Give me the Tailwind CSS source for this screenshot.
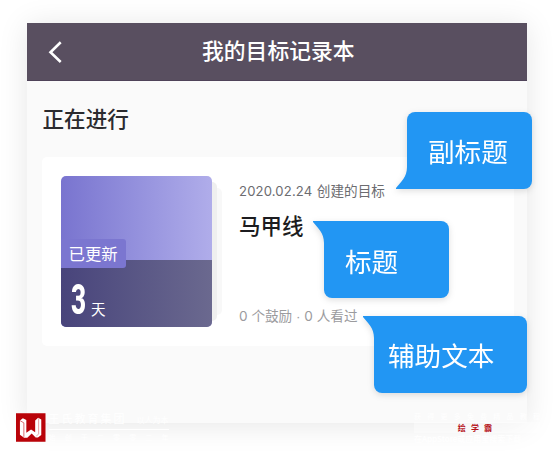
<!DOCTYPE html>
<html lang="zh-CN">
<head>
  <meta charset="UTF-8" />
  <meta name="viewport" content="width=device-width, initial-scale=1.0" />
  <title>我的目标记录本</title>
  <script src="https://cdn.jsdelivr.net/npm/@tailwindcss/browser@4"></script>
</head>
<body class="relative h-[454px] w-[554px] overflow-hidden bg-white px-[27px] pt-[23px] font-['Noto_Sans_CJK_SC',sans-serif]">

  <!-- Phone screen -->
  <div class="flex h-[400px] w-[500px] flex-col bg-[#fafafa] shadow-[0_2px_28px_rgba(0,0,0,0.1)]">
    <header class="flex h-[58px] shrink-0 items-center border-b border-[#4f4359] bg-[#594f60] text-white">
      <svg class="ml-[21px] h-[22px] w-[15px]" viewBox="0 0 15 22" fill="none" stroke="currentColor" stroke-width="2.6">
        <path d="M12.7 1.3 2.5 11.2l10.2 9.8" />
      </svg>
      <h1 class="-mt-[3px] ml-[139px] text-[21.8px] leading-none font-medium">我的目标记录本</h1>
    </header>

    <h2 class="mt-[26px] ml-[15.5px] text-[21.6px] leading-[22px] font-medium text-[#2b2b2f]">正在进行</h2>

    <!-- Goal card -->
    <div class="mt-[28px] ml-[15px] flex h-[189px] w-[472px] rounded-[5px] bg-white pt-[19px] pl-[19px]">
      <div class="relative h-[151px] w-[151px] shrink-0">
        <div class="absolute top-[12px] -right-[10px] h-[127px] w-5 rounded-[5px] bg-[#f8f8f8]"></div>
        <div class="absolute top-[6px] -right-[5px] h-[139px] w-5 rounded-[5px] bg-[#efefef]"></div>
        <div class="relative flex h-full w-full flex-col overflow-hidden rounded-[5px] bg-linear-to-r from-[#7974cf] to-[#b0adea]">
          <div class="mt-[63px] flex h-[29px] shrink-0">
            <span class="z-10 w-[65px] rounded-r-[3px] bg-[#7b76d0] pl-[7.5px] text-[16.4px] leading-[28px] text-white">已更新</span>
          </div>
          <div class="-mt-[8px] flex h-[67px] items-start bg-linear-to-r from-[#48447b] to-[#6b698f] pl-[10px] text-white">
            <span class="mt-[17px] w-[20px] origin-left scale-x-[0.61] font-[Roboto,sans-serif] text-[43px] leading-[44px] font-extrabold">3</span>
            <span class="mt-[40px] text-[14.5px] leading-[17px]">天</span>
          </div>
        </div>
      </div>
      <div class="ml-[27px] flex flex-col whitespace-nowrap">
        <p class="mt-[6px] text-[13.6px] leading-[16px] text-[#6c6c70]"><span class="mr-[4.5px] font-[Inter,sans-serif] text-[13.1px] tracking-[0.15px]">2020.02.24</span>创建的目标</p>
        <h3 class="mt-[15px] text-[21.5px] leading-[22px] font-medium text-[#1c1c20]">马甲线</h3>
        <p class="mt-[72px] font-[Inter,'Noto_Sans_CJK_SC',sans-serif] text-[13.6px] leading-[16px] text-[#9b9b9e]">0 个鼓励 <span class="font-['Liberation_Sans',sans-serif]">·</span> 0 人看过</p>
      </div>
    </div>
  </div>

  <!-- Callouts -->
  <div class="absolute top-[112px] left-[407px] h-[77px] w-[125px] rounded-[8px] rounded-bl-none bg-[#2296f3] pl-[21px] text-[26.6px] leading-[78px] text-white drop-shadow-[0_2px_3px_rgba(0,0,0,0.13)]">
    <svg class="absolute bottom-0 -left-[11px] h-[22px] w-[12px] fill-[#2296f3]" viewBox="0 0 12 22">
      <path d="M11 0C11 10 5 15 0 21v1h12V0z" />
    </svg>
    副标题
  </div>
  <div class="absolute top-[221px] left-[324px] h-[77px] w-[125px] rounded-[8px] rounded-tl-none bg-[#2296f3] pl-[21px] text-[26.6px] leading-[80px] text-white drop-shadow-[0_2px_3px_rgba(0,0,0,0.13)]">
    <svg class="absolute top-0 -left-[11px] h-[22px] w-[12px] fill-[#2296f3]" viewBox="0 0 12 22">
      <path d="M11 22C11 12 5 7 0 1V0h12v22z" />
    </svg>
    标题
  </div>
  <div class="absolute top-[316px] left-[374px] h-[77px] w-[153px] rounded-[8px] rounded-tl-none bg-[#2296f3] pl-[14px] text-[26.6px] leading-[78px] text-white drop-shadow-[0_2px_3px_rgba(0,0,0,0.13)]">
    <svg class="absolute top-0 -left-[11px] h-[22px] w-[12px] fill-[#2296f3]" viewBox="0 0 12 22">
      <path d="M11 22C11 12 5 7 0 1V0h12v22z" />
    </svg>
    辅助文本
  </div>

  <!-- Watermark, left -->
  <div class="absolute top-[413px] left-[16px] flex gap-[3px]">
    <svg class="h-[29px] w-[29.5px]" viewBox="0 0 30 29">
      <rect width="30" height="29" fill="#b90309" />
      <path d="M4 7.5 7 5l3.5 1.8v13l4.8-3.3 4.2 2.8V7.5l3-2.8 3.2 1.6V22l-3.4 2.6h-2.3l-4-4-4.5 4.2H8.2L4 21.8z" fill="#fff" />
      <path d="M4.2 7.6 8 9.8V24" fill="none" stroke="#d0484c" stroke-width=".8" />
      <path d="M23 5.2V21l-2.5 2.5" fill="none" stroke="#d0484c" stroke-width=".5" />
    </svg>
    <div class="w-[120px] text-white">
      <div class="flex h-[17px] items-start justify-between border-b border-white leading-none">
        <span class="text-[11px] tracking-[2px]">王氏教育集团</span>
        <span class="mt-[3px] text-[8px]">以人为本</span>
      </div>
      <div class="mt-[4px] flex justify-between text-[7px] leading-none"><span>始</span><span>创</span><span>于</span><span>二</span><span>零</span><span>零</span><span>二</span><span>年</span></div>
    </div>
  </div>

  <!-- Watermark, right -->
  <div class="absolute top-[411px] left-[414px] w-[126px] text-white">
    <div class="flex h-[11px] justify-between text-[7px] leading-[10px]"><span>获</span><span>得</span><span>更</span><span>多</span><span>免</span><span>费</span><span>精</span><span>品</span><span>教</span><span>程</span></div>
    <div class="flex h-[11px] justify-center bg-white/40 text-[8px] leading-[11px] font-bold tracking-[5.2px] text-[#b5121b]"><span class="ml-px">绘学霸</span></div>
    <div class="text-[8px] leading-[11px] font-medium whitespace-nowrap">在AppStore或应用宝搜索下载</div>
  </div>

</body>
</html>
